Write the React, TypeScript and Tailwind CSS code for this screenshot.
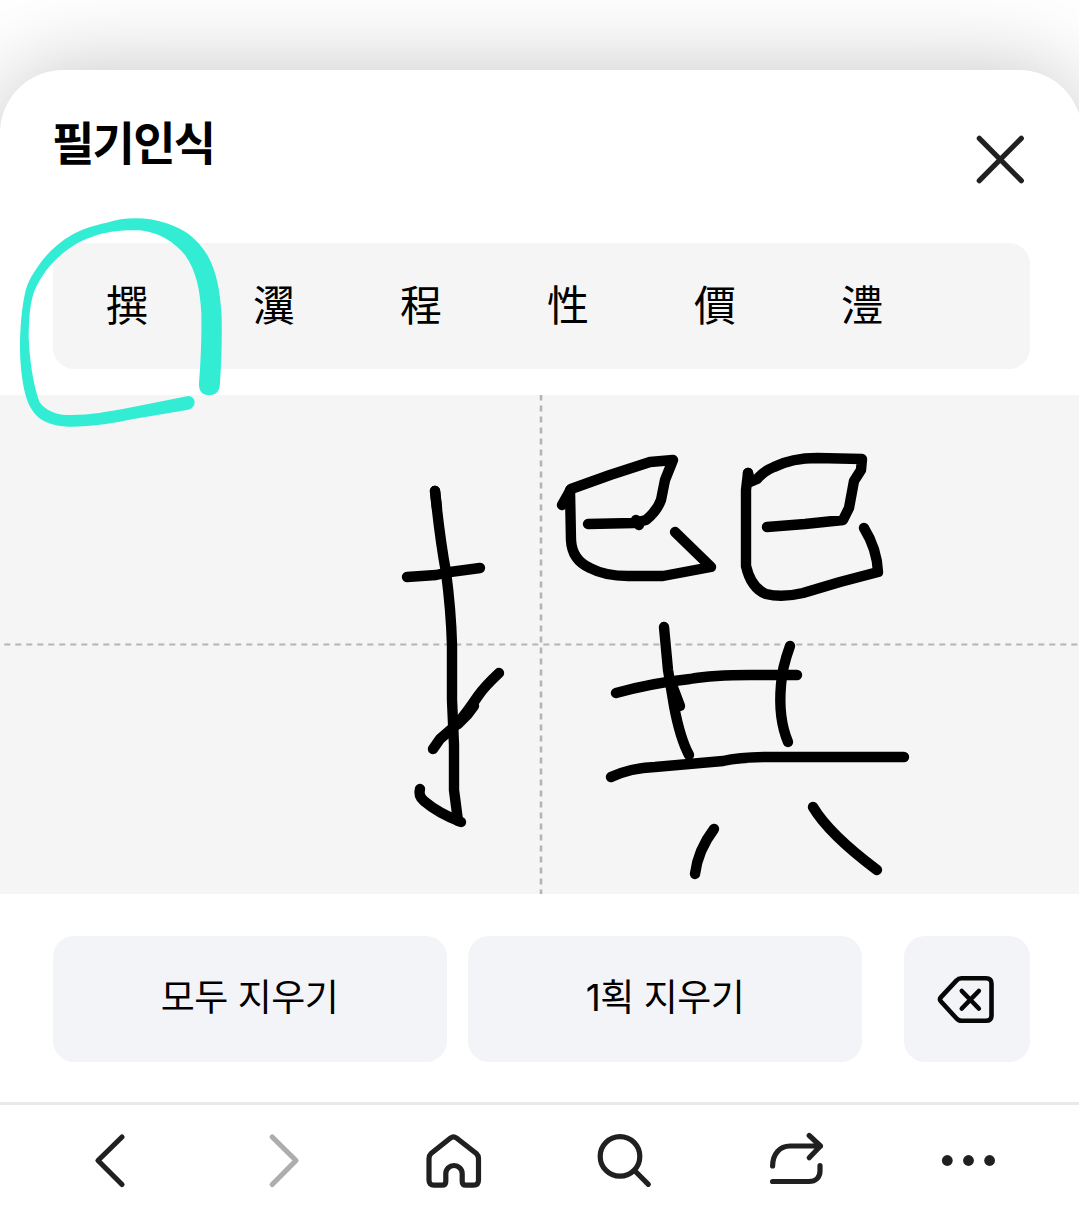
import React from 'react';

const candidates = ['撰', '瀷', '程', '性', '價', '澧'];

// Pen strokes, in canvas coordinates
const inkStrokes = [
  'M435 491 Q440 540 446 572 Q451 610 452 645 L452 700 L454 745 L454 790 L458 821',
  'M435 491 L437 508',
  'M407 577 L436 575 L450 572 L480 568',
  'M499 673 Q484 687 478 696 Q463 718 455 726 L440 739 L433 749',
  'M474 706 L468 714 L458 724',
  'M420 789 Q418 796 424 801 Q438 813 461 822',
  'M562 505 L571 489 L610 475 L650 462 L673 460 L665 480 L661 500 Q657 511 646 520 L634 523 L588 524',
  'M636 520 L639 525',
  'M570 490 L571 540 Q572 560 590 568 Q605 576 628 576 L663 576 L711 567 L675 532',
  'M748 473 L750 482 L757 479 Q764 471 774 467 Q792 458 817 458 L862 459 L861 470 L854 481 L849 508 L843 520 L805 524 L767 527',
  'M748 473 L746 490 L746 566 Q751 588 766 594 Q782 598 803 593 L840 582 L878 572 Q877 549 864 528',
  'M664 627 L668 670 L674 706 Q680 738 689 755',
  'M671 682 L680 706',
  'M616 693 Q652 683 690 679 Q713 675 750 675 L797 675',
  'M790 646 Q782 668 781 685 Q778 718 788 742',
  'M611 777 Q630 768 655 767 L723 761 Q740 757 770 757 L904 757',
  'M714 829 Q698 850 695 874',
  'M813 807 Q829 834 877 870',
];

interface NavIconProps {
  children: React.ReactNode;
  color?: string;
}

const NavIcon: React.FC<NavIconProps> = ({ children, color = '#202020' }) => (
  <button className="flex flex-1 items-center justify-center">
    <svg
      width="64"
      height="64"
      viewBox="0 0 64 64"
      fill="none"
      stroke={color}
      strokeWidth="5.2"
      strokeLinecap="round"
      strokeLinejoin="round"
    >
      {children}
    </svg>
  </button>
);

const HandwritingCanvas: React.FC = () => (
  <svg className="block h-[499px] w-full bg-[#f5f5f5]" viewBox="0 395 1079 499" fill="none">
    <path d="M541 394.5 V894" stroke="#b4b4b4" strokeWidth="2.6" strokeDasharray="6 5" />
    <path d="M4.3 644.5 H1079" stroke="#b4b4b4" strokeWidth="2" strokeDasharray="6 5" />
    <g stroke="#000" strokeWidth="10.4" strokeLinecap="round" strokeLinejoin="round">
      {inkStrokes.map((d) => (
        <path key={d} d={d} />
      ))}
    </g>
  </svg>
);

const App: React.FC = () => {
  return (
    <div className="h-[1217px] w-[1079px] overflow-hidden bg-white pt-[70px] font-['Noto_Sans_CJK_KR',sans-serif] text-black">
      <div className="relative flex h-[1147px] w-[1082px] flex-col rounded-t-[63px] bg-white pr-[3px] shadow-[0_0_90px_rgba(0,0,0,0.23)]">
        {/* Header */}
        <div className="flex h-[173px] items-start justify-between pl-[52px] pr-[47px]">
          <h1 className="mt-[38px] text-[46px] leading-[64px] font-bold tracking-[-1.7px]">필기인식</h1>
          <button className="mt-[58px]">
            <svg width="64" height="64" viewBox="0 0 64 64" stroke="#202020" strokeWidth="5.2" strokeLinecap="round">
              <path d="M11.3 10.3 L53.3 52.7 M53.3 10.3 L11.3 52.7" />
            </svg>
          </button>
        </div>

        {/* Candidates */}
        <div className="mx-[53px] mr-[49px] flex h-[126px] shrink-0 items-center rounded-[21px] bg-[#f5f5f5] pb-[6px]">
          {candidates.map((char) => (
            <button key={char} className="w-[147px] pl-px text-center text-[42px] leading-[60px]">
              {char}
            </button>
          ))}
        </div>

        <div className="mt-[26px]">
          <HandwritingCanvas />
        </div>

        {/* Erase actions */}
        <div className="mt-[42px] flex h-[126px] shrink-0 pl-[53px] font-[Inter,'Noto_Sans_CJK_KR',sans-serif] text-[37px] tracking-[-0.5px]">
          <button className="mr-[21px] w-[394px] rounded-[21px] bg-[#f3f4f8] pr-px pb-[3px]">모두 지우기</button>
          <button className="mr-[42px] w-[394px] rounded-[21px] bg-[#f3f4f8] pb-[3px]">1획 지우기</button>
          <button className="flex w-[126px] items-center justify-center rounded-[21px] bg-[#f3f4f8]">
            <svg
              width="64"
              height="64"
              viewBox="0 0 64 64"
              fill="none"
              stroke="#060606"
              strokeWidth="4.6"
              strokeLinecap="round"
              strokeLinejoin="round"
            >
              <path d="M26.5 11.2 H51 Q56.5 11.2 56.5 16.5 V48.5 Q56.5 53.8 51 53.8 H26.5 Q23.5 53.8 21.6 51.5 L6 34.5 Q4 32.3 6 30.1 L21.6 13.4 Q23.5 11.2 26.5 11.2 Z" />
              <path d="M26.8 24 L43.8 41.5 M43.8 24 L26.8 41.5" />
            </svg>
          </button>
        </div>

        {/* Browser toolbar */}
        <div className="mt-10 flex h-[115px] shrink-0 border-t-[3px] border-[#e9e9e9] px-6">
          <NavIcon>
            <path d="M44 8 L20 31.5 L44 55.5" />
          </NavIcon>
          <NavIcon color="#adadad">
            <path d="M22.2 8 L46 31.5 L22.2 55.5" />
          </NavIcon>
          <NavIcon>
            <path d="M28.5 9 Q31.5 6.8 34.5 9 L54.3 24.5 Q56.5 26.5 56.5 29.5 V51 Q56.5 56.2 51.5 56.2 H44 Q40.2 56.2 40.2 52.5 V44.5 A8.2 8 0 0 0 23.8 44.5 V52.5 Q23.8 56.2 20 56.2 H12 Q7 56.2 7 51 V29.5 Q7 26.5 9 24.5 Z" />
          </NavIcon>
          <NavIcon>
            <circle cx="27" cy="27.4" r="19.8" />
            <path d="M42 42 L55.3 55.3" />
          </NavIcon>
          <NavIcon>
            <path d="M7.6 37 C7.6 25 15 17 25 17 H55.5 M44.2 6.5 L55.5 17 L44.2 28.7" />
            <path d="M7.6 52.5 H44 C50.5 52.5 55 48.5 55 42 V36.5" />
          </NavIcon>
          <NavIcon>
            <g fill="#202020" stroke="none">
              <circle cx="10.3" cy="31.5" r="5.4" />
              <circle cx="31.5" cy="31.5" r="5.4" />
              <circle cx="52.6" cy="31.5" r="5.4" />
            </g>
          </NavIcon>
        </div>

        {/* Marker circle over the first candidate */}
        <svg
          className="pointer-events-none absolute top-[140px] left-0"
          width="360"
          height="230"
          viewBox="0 0 1080 690"
          fill="#32ecd4"
        >
          <path d="M660 520 C665 440 666 380 665 320 C660 240 650 185 622 135 C590 85 555 58 500 40 C450 22 380 18 320 38 C280 46 250 56 215 75 C180 95 150 122 128 150 C100 188 82 215 75 250 C62 310 58 390 61 450 C66 520 76 575 100 605 C120 635 160 648 205 650 C270 651 350 638 400 627 L565 599 C592 592 588 558 565 558 L380 595 C320 606 260 617 200 615 C165 613 135 600 118 575 C98 520 88 440 86 380 C87 320 90 280 103 243 C125 195 150 163 185 133 C215 108 240 93 275 81 C325 62 370 60 420 61 C480 68 520 95 555 135 C590 185 600 240 604 310 C605 390 602 460 597 520 Q596 556 628 556 Q658 556 660 520 Z" />
        </svg>
      </div>
    </div>
  );
};

export default App;
